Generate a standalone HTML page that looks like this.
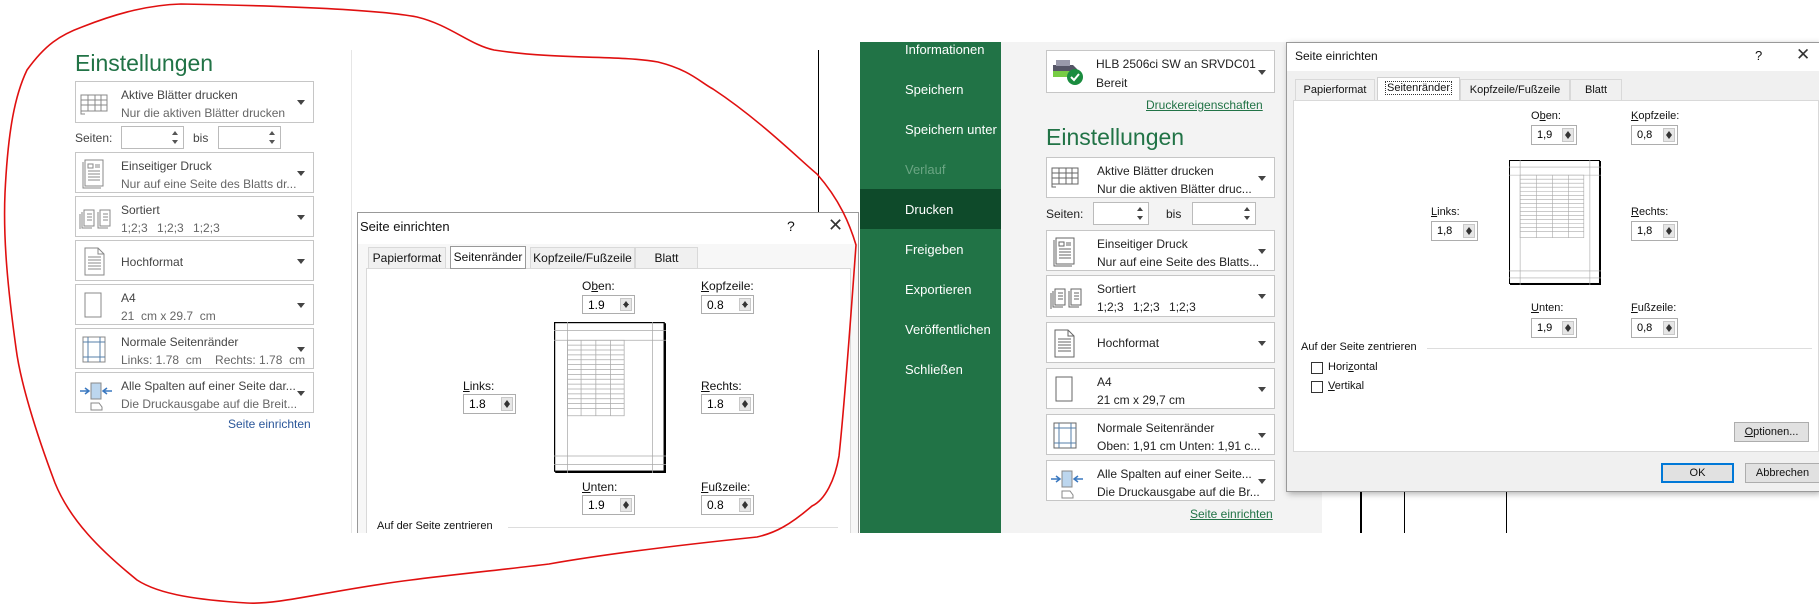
<!DOCTYPE html>
<html><head><meta charset="utf-8"><style>
*{margin:0;padding:0;box-sizing:border-box}
body{width:1819px;height:606px;background:#fff;position:relative;overflow:hidden;font-family:"Liberation Sans",sans-serif;}
.a{position:absolute}
.box{position:absolute;border:1px solid #c6c6c6;background:#fff}
.box .t1{position:absolute;white-space:nowrap;font-size:12px}
.box .arr{position:absolute;right:8px;top:50%;margin-top:-2px;width:0;height:0;border-left:4px solid transparent;border-right:4px solid transparent;border-top:5px solid #444}
.L .t1{color:#444}.L .sub{color:#666}
.R .t1{color:#222}
.spin{position:absolute;border:1px solid #bbb;background:#fff}
.dlg{position:absolute;background:#f0f0f0;border:1px solid #999;overflow:hidden}
.tab{position:absolute;border:1px solid #d9d9d9;border-bottom:none;background:#f0f0f0;text-align:center;color:#111}
.tab.sel{background:#fff;z-index:2}
.panel{position:absolute;background:#fff;border:1px solid #d9d9d9}
.lbl{position:absolute;color:#111;white-space:nowrap}
.inp{position:absolute;background:#fff;border:1px solid #adadad}
.inp span{position:absolute;left:5px;top:50%;transform:translateY(-50%)}
.inp i{position:absolute;right:2px;top:2px;bottom:2px;width:12px;background:#e6e6e6;border:1px solid #c8c8c8}
.inp i:before{content:"";position:absolute;left:2px;top:2px;border-left:3px solid transparent;border-right:3px solid transparent;border-bottom:4px solid #333}
.inp i:after{content:"";position:absolute;left:2px;bottom:2px;border-left:3px solid transparent;border-right:3px solid transparent;border-top:4px solid #333}
.menu{position:absolute;left:905px;color:#fff;font-size:13px}
.btn{position:absolute;background:#e1e1e1;border:1px solid #adadad;text-align:center;font-size:11px;color:#111}
</style></head><body>

<!-- LEFT EXCEL PANEL -->
<div class="a" style="left:75px;top:50px;font-size:23px;color:#217346">Einstellungen</div>
<div class="a" style="left:351px;top:50px;width:1px;height:483px;background:#e6e6e6"></div>
<div class="a" style="left:818px;top:50px;width:1px;height:162px;background:#000"></div>

<div class="box L" style="left:75px;top:81px;width:239px;height:42px"><svg class="a" style="left:4px;top:12px" width="30" height="22"><g fill="none" stroke="#888"><rect x="1" y="1" width="26" height="16"/><path d="M1 6h26M1 11h26M8 1v16M15 1v16M21 1v16M1 17l0 3 4 0"/></g></svg><div class="t1" style="left:45px;top:6px">Aktive Blätter drucken</div><div class="t1 sub" style="left:45px;top:24px">Nur die aktiven Blätter drucken</div><div class="arr"></div></div>
<div class="a" style="left:75px;top:131px;font-size:12px;color:#444">Seiten:</div>
<div class="spin" style="left:121px;top:126px;width:63px;height:23px"><div class="a" style="right:5px;top:4px;border-left:3px solid transparent;border-right:3px solid transparent;border-bottom:4px solid #555"></div><div class="a" style="right:5px;bottom:4px;border-left:3px solid transparent;border-right:3px solid transparent;border-top:4px solid #555"></div></div>
<div class="a" style="left:193px;top:131px;font-size:12px;color:#444">bis</div>
<div class="spin" style="left:218px;top:126px;width:63px;height:23px"><div class="a" style="right:5px;top:4px;border-left:3px solid transparent;border-right:3px solid transparent;border-bottom:4px solid #555"></div><div class="a" style="right:5px;bottom:4px;border-left:3px solid transparent;border-right:3px solid transparent;border-top:4px solid #555"></div></div>
<div class="box L" style="left:75px;top:152px;width:239px;height:41px"><svg class="a" style="left:6px;top:6px" width="24" height="30"><g fill="none" stroke="#888"><rect x="3" y="1" width="18" height="26"/><path d="M1 3v26h18M6 5h5v4H6zM13 6h5M13 8h5M6 12h12M6 15h12M6 18h12M6 21h12"/></g></svg><div class="t1" style="left:45px;top:6px">Einseitiger Druck</div><div class="t1 sub" style="left:45px;top:24px">Nur auf eine Seite des Blatts dr...</div><div class="arr"></div></div>
<div class="box L" style="left:75px;top:196px;width:239px;height:41px"><svg class="a" style="left:3px;top:10px" width="34" height="22"><g fill="none" stroke="#888"><rect x="5" y="3" width="10" height="16"/><path d="M3 5v16h10M1 7v16M8 7h5M8 10h5M8 13h5"/><rect x="21" y="3" width="10" height="16"/><path d="M19 5v16h10M24 7h5M24 10h5M24 13h5"/></g></svg><div class="t1" style="left:45px;top:6px">Sortiert</div><div class="t1 sub" style="left:45px;top:24px;word-spacing:6px">1;2;3 1;2;3 1;2;3</div><div class="arr"></div></div>
<div class="box L" style="left:75px;top:240px;width:239px;height:41px"><svg class="a" style="left:7px;top:6px" width="24" height="30"><g fill="none" stroke="#888"><path d="M2 1h13l6 6v21H2zM15 1v6h6M5 10h13M5 13h13M5 16h13M5 19h13M5 22h13"/></g></svg><div class="t1" style="left:45px;top:14px">Hochformat</div><div class="arr"></div></div>
<div class="box L" style="left:75px;top:284px;width:239px;height:41px"><svg class="a" style="left:8px;top:7px" width="20" height="28"><rect x="1" y="1" width="16" height="24" fill="none" stroke="#888"/></svg><div class="t1" style="left:45px;top:6px">A4</div><div class="t1 sub" style="left:45px;top:24px">21&nbsp; cm x 29.7&nbsp; cm</div><div class="arr"></div></div>
<div class="box L" style="left:75px;top:328px;width:239px;height:41px"><svg class="a" style="left:6px;top:7px" width="26" height="28"><g fill="none" stroke="#557fa8"><rect x="1" y="1" width="22" height="25" stroke="#888"/><path d="M1 6h22M1 21h22M6 1v25M18 1v25"/></g></svg><div class="t1" style="left:45px;top:6px">Normale Seitenränder</div><div class="t1 sub" style="left:45px;top:24px">Links: 1.78&nbsp; cm&nbsp;&nbsp;&nbsp; Rechts: 1.78&nbsp; cm</div><div class="arr"></div></div>
<div class="box L" style="left:75px;top:372px;width:239px;height:41px"><svg class="a" style="left:3px;top:6px" width="34" height="32"><g fill="none"><rect x="12" y="4" width="10" height="16" fill="#bcd6ee" stroke="#888"/><path d="M1 12h9M6 9l4 3-4 3M33 12h-9M28 9l-4 3 4 3" stroke="#3a78c0" stroke-width="1.5"/><path d="M12 24h8l3 4v3H12z" stroke="#888"/></g></svg><div class="t1" style="left:45px;top:6px">Alle Spalten auf einer Seite dar...</div><div class="t1 sub" style="left:45px;top:24px">Die Druckausgabe auf die Breit...</div><div class="arr"></div></div>
<div class="a" style="left:228px;top:417px;font-size:12px;color:#2b579a">Seite einrichten</div>

<!-- DIALOG 1 -->
<div class="dlg" style="left:357px;top:212px;width:502px;height:321px;background:#f7f7f7;font-size:12px;border-bottom:none">
 <div class="a" style="left:0;top:0;width:100%;height:31px;background:#fff"></div>
 <div class="lbl" style="left:2px;top:6px;font-size:13px">Seite einrichten</div>
 <div class="lbl" style="left:429px;top:5px;font-size:14px">?</div>
 <div class="lbl" style="left:470px;top:2px;font-size:18px;color:#333">✕</div>
 <div class="tab" style="left:10px;top:34px;width:78px;height:21px;line-height:20px">Papierformat</div>
 <div class="tab sel" style="left:92px;top:33px;width:76px;height:23px;line-height:20px;border:1px solid #999">Seitenränder</div>
 <div class="tab" style="left:172px;top:34px;width:105px;height:21px;line-height:20px">Kopfzeile/Fußzeile</div>
 <div class="tab" style="left:277px;top:34px;width:63px;height:21px;line-height:20px">Blatt</div>
 <div class="panel" style="left:8px;top:55px;width:485px;height:280px"></div>
 <div class="lbl" style="left:224px;top:66px">O<u>b</u>en:</div>
 <div class="inp" style="left:224px;top:82px;width:53px;height:19px"><span>1.9</span><i></i></div>
 <div class="lbl" style="left:343px;top:66px"><u>K</u>opfzeile:</div>
 <div class="inp" style="left:343px;top:82px;width:53px;height:19px"><span>0.8</span><i></i></div>
 <svg class="a" style="left:196px;top:109px" width="112" height="151" viewBox="0 0 91 124" preserveAspectRatio="none"><rect x="0.5" y="0.5" width="89" height="122" fill="#fff" stroke="#000"/><path d="M1 123.5h90M90.5 1v123" stroke="#000" stroke-width="1.5"/><g stroke="#aaa" stroke-width="0.6" fill="none"><path d="M11 0v124M80 0v124M0 7h91M0 15h91M0 110h91M0 117h91"/><rect x="11" y="15" width="46" height="62"/><path d="M22 15v62M34 15v62M46 15v62M11 19h46M11 23h46M11 27h46M11 31h46M11 35h46M11 39h46M11 43h46M11 47h46M11 51h46M11 55h46M11 59h46M11 63h46M11 67h46M11 71h46"/></g></svg>
 <div class="lbl" style="left:105px;top:166px"><u>L</u>inks:</div>
 <div class="inp" style="left:105px;top:181px;width:53px;height:20px"><span>1.8</span><i></i></div>
 <div class="lbl" style="left:343px;top:166px"><u>R</u>echts:</div>
 <div class="inp" style="left:343px;top:181px;width:53px;height:20px"><span>1.8</span><i></i></div>
 <div class="lbl" style="left:224px;top:267px"><u>U</u>nten:</div>
 <div class="inp" style="left:224px;top:282px;width:53px;height:20px"><span>1.9</span><i></i></div>
 <div class="lbl" style="left:343px;top:267px"><u>F</u>ußzeile:</div>
 <div class="inp" style="left:343px;top:282px;width:53px;height:20px"><span>0.8</span><i></i></div>
 <div class="lbl" style="left:19px;top:307px;font-size:11px">Auf der Seite zentrieren</div>
 <div class="a" style="left:150px;top:314px;width:330px;height:1px;background:#ddd"></div>
</div>

<!-- RIGHT EXCEL -->
<div class="a" style="left:860px;top:42px;width:141px;height:491px;background:#217346"></div>
<div class="a" style="left:860px;top:189px;width:141px;height:40px;background:#0e4a2a"></div>
<div class="menu" style="top:42px">Informationen</div>
<div class="menu" style="top:82px">Speichern</div>
<div class="menu" style="top:122px">Speichern unter</div>
<div class="menu" style="top:162px;color:#6aa583">Verlauf</div>
<div class="menu" style="top:202px">Drucken</div>
<div class="menu" style="top:242px">Freigeben</div>
<div class="menu" style="top:282px">Exportieren</div>
<div class="menu" style="top:322px">Veröffentlichen</div>
<div class="menu" style="top:362px">Schließen</div>
<div class="a" style="left:1001px;top:42px;width:321px;height:491px;background:#f3f3f3"></div>
<div class="a" style="left:1360px;top:470px;width:2px;height:63px;background:#000"></div>
<div class="a" style="left:1404px;top:470px;width:1px;height:63px;background:#000"></div>
<div class="a" style="left:1506px;top:470px;width:1px;height:63px;background:#000"></div>

<div class="box R" style="left:1046px;top:50px;width:229px;height:43px"><svg class="a" style="left:4px;top:6px" width="34" height="30"><path d="M2 8h20l4 4v8H2z" fill="#556"/><rect x="5" y="3" width="14" height="6" fill="#99a"/><rect x="2" y="14" width="18" height="6" fill="#7c4"/><circle cx="24" cy="20" r="8" fill="#1a8c3f"/><path d="M20 20l3 3 5-6" stroke="#fff" stroke-width="2" fill="none"/></svg><div class="t1" style="left:49px;top:6px">HLB 2506ci SW an SRVDC01</div><div class="t1" style="left:49px;top:25px">Bereit</div><div class="arr"></div></div>
<div class="a" style="left:1146px;top:98px;font-size:12px;color:#217346;text-decoration:underline">Druckereigenschaften</div>
<div class="a" style="left:1046px;top:124px;font-size:23px;color:#217346">Einstellungen</div>
<div class="box R" style="left:1046px;top:157px;width:229px;height:41px"><svg class="a" style="left:4px;top:9px" width="30" height="24"><g fill="none" stroke="#666"><rect x="1" y="1" width="26" height="16"/><path d="M1 6h26M1 11h26M8 1v16M15 1v16M21 1v16M1 17v3h4"/></g></svg><div class="t1" style="left:50px;top:6px">Aktive Blätter drucken</div><div class="t1" style="left:50px;top:24px">Nur die aktiven Blätter druc...</div><div class="arr"></div></div>
<div class="a" style="left:1046px;top:207px;font-size:12px;color:#222">Seiten:</div>
<div class="spin" style="left:1093px;top:202px;width:56px;height:23px"><div class="a" style="right:5px;top:4px;border-left:3px solid transparent;border-right:3px solid transparent;border-bottom:4px solid #444"></div><div class="a" style="right:5px;bottom:4px;border-left:3px solid transparent;border-right:3px solid transparent;border-top:4px solid #444"></div></div>
<div class="a" style="left:1166px;top:207px;font-size:12px;color:#222">bis</div>
<div class="spin" style="left:1192px;top:202px;width:64px;height:23px"><div class="a" style="right:5px;top:4px;border-left:3px solid transparent;border-right:3px solid transparent;border-bottom:4px solid #444"></div><div class="a" style="right:5px;bottom:4px;border-left:3px solid transparent;border-right:3px solid transparent;border-top:4px solid #444"></div></div>
<div class="box R" style="left:1046px;top:230px;width:229px;height:41px"><svg class="a" style="left:6px;top:6px" width="24" height="30"><g fill="none" stroke="#666"><rect x="3" y="1" width="18" height="26"/><path d="M1 3v26h18M6 5h5v4H6zM13 6h5M13 8h5M6 12h12M6 15h12M6 18h12M6 21h12"/></g></svg><div class="t1" style="left:50px;top:6px">Einseitiger Druck</div><div class="t1" style="left:50px;top:24px">Nur auf eine Seite des Blatts...</div><div class="arr"></div></div>
<div class="box R" style="left:1046px;top:275px;width:229px;height:42px"><svg class="a" style="left:3px;top:10px" width="34" height="24"><g fill="none" stroke="#666"><rect x="5" y="3" width="10" height="16"/><path d="M3 5v16h10M1 7v16M8 7h5M8 10h5M8 13h5"/><rect x="21" y="3" width="10" height="16"/><path d="M19 5v16h10M24 7h5M24 10h5M24 13h5"/></g></svg><div class="t1" style="left:50px;top:6px">Sortiert</div><div class="t1" style="left:50px;top:24px;word-spacing:6px">1;2;3 1;2;3 1;2;3</div><div class="arr"></div></div>
<div class="box R" style="left:1046px;top:322px;width:229px;height:41px"><svg class="a" style="left:6px;top:6px" width="24" height="30"><g fill="none" stroke="#666"><path d="M2 1h13l6 6v21H2zM15 1v6h6M5 10h13M5 13h13M5 16h13M5 19h13M5 22h13"/></g></svg><div class="t1" style="left:50px;top:13px">Hochformat</div><div class="arr"></div></div>
<div class="box R" style="left:1046px;top:368px;width:229px;height:41px"><svg class="a" style="left:8px;top:7px" width="20" height="28"><rect x="1" y="1" width="16" height="24" fill="none" stroke="#666"/></svg><div class="t1" style="left:50px;top:6px">A4</div><div class="t1" style="left:50px;top:24px">21 cm x 29,7 cm</div><div class="arr"></div></div>
<div class="box R" style="left:1046px;top:414px;width:229px;height:41px"><svg class="a" style="left:6px;top:7px" width="26" height="28"><g fill="none" stroke="#557fa8"><rect x="1" y="1" width="22" height="25" stroke="#666"/><path d="M1 6h22M1 21h22M6 1v25M18 1v25"/></g></svg><div class="t1" style="left:50px;top:6px">Normale Seitenränder</div><div class="t1" style="left:50px;top:24px">Oben: 1,91 cm Unten: 1,91 c...</div><div class="arr"></div></div>
<div class="box R" style="left:1046px;top:460px;width:229px;height:41px"><svg class="a" style="left:3px;top:6px" width="34" height="32"><g fill="none"><rect x="12" y="4" width="10" height="16" fill="#bcd6ee" stroke="#888"/><path d="M1 12h9M6 9l4 3-4 3M33 12h-9M28 9l-4 3 4 3" stroke="#3a78c0" stroke-width="1.5"/><path d="M12 24h8l3 4v3H12z" stroke="#888"/></g></svg><div class="t1" style="left:50px;top:6px">Alle Spalten auf einer Seite...</div><div class="t1" style="left:50px;top:24px">Die Druckausgabe auf die Br...</div><div class="arr"></div></div>
<div class="a" style="left:1190px;top:507px;font-size:12px;color:#217346;text-decoration:underline">Seite einrichten</div>

<!-- DIALOG 2 -->
<div class="dlg" style="left:1286px;top:42px;width:533px;height:450px;font-size:11px;box-shadow:2px 2px 6px rgba(0,0,0,.3);border-right:none">
 <div class="a" style="left:0;top:0;width:100%;height:28px;background:#fff"></div>
 <div class="lbl" style="left:8px;top:6px;font-size:12px">Seite einrichten</div>
 <div class="lbl" style="left:468px;top:5px;font-size:13px">?</div>
 <div class="lbl" style="left:509px;top:2px;font-size:17px;color:#333">✕</div>
 <div class="tab" style="left:8px;top:36px;width:80px;height:21px;line-height:20px">Papierformat</div>
 <div class="tab sel" style="left:90px;top:34px;width:83px;height:23px;line-height:20px;border-color:#d0d0d0"><span style="outline:1px dotted #333;padding:0 1px">Seitenränder</span></div>
 <div class="tab" style="left:173px;top:36px;width:110px;height:21px;line-height:20px">Kopfzeile/Fußzeile</div>
 <div class="tab" style="left:283px;top:36px;width:52px;height:21px;line-height:20px">Blatt</div>
 <div class="panel" style="left:6px;top:57px;width:526px;height:352px"></div>
 <div class="lbl" style="left:244px;top:67px">O<u>b</u>en:</div>
 <div class="inp" style="left:244px;top:82px;width:46px;height:20px"><span>1,9</span><i></i></div>
 <div class="lbl" style="left:344px;top:67px"><u>K</u>opfzeile:</div>
 <div class="inp" style="left:344px;top:82px;width:47px;height:20px"><span>0,8</span><i></i></div>
 <svg class="a" style="left:222px;top:117px" width="92" height="125" viewBox="0 0 91 124" preserveAspectRatio="none"><rect x="0.5" y="0.5" width="89" height="122" fill="#fff" stroke="#000"/><path d="M1 123.5h90M90.5 1v123" stroke="#000" stroke-width="1.5"/><g stroke="#aaa" stroke-width="0.6" fill="none"><path d="M11 0v124M80 0v124M0 7h91M0 15h91M0 110h91M0 117h91"/><rect x="11" y="15" width="63" height="62"/><path d="M27 15v62M43 15v62M59 15v62M11 19h63M11 23h63M11 27h63M11 31h63M11 35h63M11 39h63M11 43h63M11 47h63M11 51h63M11 55h63M11 59h63M11 63h63M11 67h63M11 71h63"/></g></svg>
 <div class="lbl" style="left:144px;top:163px"><u>L</u>inks:</div>
 <div class="inp" style="left:144px;top:178px;width:47px;height:20px"><span>1,8</span><i></i></div>
 <div class="lbl" style="left:344px;top:163px"><u>R</u>echts:</div>
 <div class="inp" style="left:344px;top:178px;width:47px;height:20px"><span>1,8</span><i></i></div>
 <div class="lbl" style="left:244px;top:259px"><u>U</u>nten:</div>
 <div class="inp" style="left:244px;top:275px;width:46px;height:20px"><span>1,9</span><i></i></div>
 <div class="lbl" style="left:344px;top:259px"><u>F</u>ußzeile:</div>
 <div class="inp" style="left:344px;top:275px;width:47px;height:20px"><span>0,8</span><i></i></div>
 <div class="lbl" style="left:14px;top:298px">Auf der Seite zentrieren</div>
 <div class="a" style="left:140px;top:305px;width:385px;height:1px;background:#ddd"></div>
 <div class="a" style="left:24px;top:319px;width:12px;height:12px;border:1px solid #333;background:#fff"></div>
 <div class="lbl" style="left:41px;top:318px">Hori<u>z</u>ontal</div>
 <div class="a" style="left:24px;top:338px;width:12px;height:12px;border:1px solid #333;background:#fff"></div>
 <div class="lbl" style="left:41px;top:337px"><u>V</u>ertikal</div>
 <div class="btn" style="left:447px;top:379px;width:75px;height:20px;line-height:18px"><u>O</u>ptionen...</div>
 <div class="btn" style="left:374px;top:420px;width:73px;height:20px;line-height:16px;border:2px solid #0078d7">OK</div>
 <div class="btn" style="left:458px;top:420px;width:75px;height:20px;line-height:18px">Abbrechen</div>
</div>

<!-- RED CIRCLE -->
<svg class="a" style="left:0;top:0" width="1819" height="606"><path d="M181 4 C300 6 380 10 417 17 C450 25 470 45 494 50 C560 60 620 55 658 62 C690 70 700 82 713 89 C760 120 800 160 817 174 C840 200 850 225 856 245 C852 300 845 400 839 456 C835 480 825 500 812 506 C790 525 775 533 757 537 C680 545 600 555 549 564 C500 570 450 575 411 580 C330 590 280 605 247 603 C200 600 160 595 137 580 C100 550 70 520 55 483 C35 430 20 380 16 348 C8 290 3 240 5 193 C8 130 15 95 27 70 C45 45 60 35 82 27 C120 12 150 5 181 4 Z" fill="none" stroke="#e01010" stroke-width="1.6"/></svg>
</body></html>
